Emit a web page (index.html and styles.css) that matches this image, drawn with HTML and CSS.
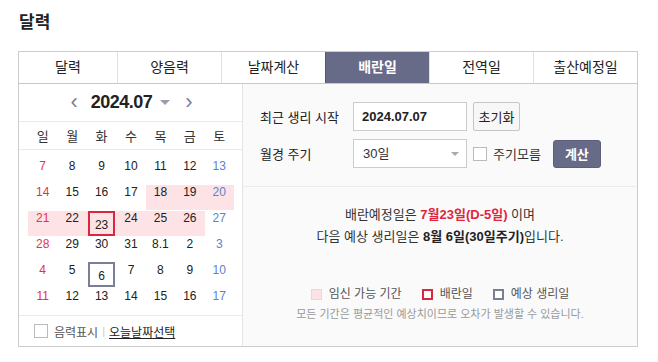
FILE: index.html
```html
<!DOCTYPE html>
<html lang="ko">
<head>
    <meta charset="UTF-8">
    <title>달력 - 배란일</title>
    <link rel="stylesheet" href="styles.css">
</head>
<body>
    <h2 class="page-title">달력</h2>

    <div class="cal-wrap">
        <ul class="tabs">
            <li>달력</li>
            <li>양음력</li>
            <li>날짜계산</li>
            <li class="on">배란일</li>
            <li>전역일</li>
            <li>출산예정일</li>
        </ul>

        <div class="cal-body">
            <div class="cal-left">
                <div class="cal-head">
                    <span class="arrow prev">&lsaquo;</span>
                    <span class="month">2024.07</span>
                    <span class="caret"></span>
                    <span class="arrow next-m">&rsaquo;</span>
                </div>
                <div class="week">
                    <span>일</span><span>월</span><span>화</span><span>수</span><span>목</span><span>금</span><span>토</span>
                </div>
                <div class="days" id="days"></div>
                <div class="cal-foot">
                    <span class="chk"></span>
                    <span class="lunar">음력표시</span>
                    <span class="bar">|</span>
                    <a href="#" class="today">오늘날짜선택</a>
                </div>
            </div>

            <div class="cal-right">
                <div class="form">
                    <div class="row">
                        <label>최근 생리 시작</label>
                        <div class="field date">2024.07.07</div>
                        <button type="button" class="btn-reset">초기화</button>
                    </div>
                    <div class="row">
                        <label>월경 주기</label>
                        <div class="field select">30일<span class="sel-caret"></span></div>
                        <span class="chk"></span>
                        <span class="unknown">주기모름</span>
                        <button type="button" class="btn-calc">계산</button>
                    </div>
                </div>
                <div class="result">
                    <p>배란예정일은 <b class="red">7월23일(D-5일)</b> 이며</p>
                    <p>다음 예상 생리일은 <b>8월 6일(30일주기)</b>입니다.</p>
                    <div class="legend">
                        <span class="lg lg-fert"></span>임신 가능 기간
                        <span class="lg lg-ovul"></span>배란일
                        <span class="lg lg-next"></span>예상 생리일
                    </div>
                    <p class="note">모든 기간은 평균적인 예상치이므로 오차가 발생할 수 있습니다.</p>
                </div>
            </div>
        </div>
    </div>

    <script>
        // weeks shown for July 2024 (starting from the week of the 7th)
        var weeks = [
            ["7", "8", "9", "10", "11", "12", "13"],
            ["14", "15", "16", "17", "18", "19", "20"],
            ["21", "22", "23", "24", "25", "26", "27"],
            ["28", "29", "30", "31", "8.1", "2", "3"],
            ["4", "5", "6", "7", "8", "9", "10"],
            ["11", "12", "13", "14", "15", "16", "17"]
        ];
        var fertile = { "1-4": 1, "1-5": 1, "1-6": 1, "2-0": 1, "2-1": 1, "2-2": 1, "2-3": 1, "2-4": 1, "2-5": 1 };
        var days = document.getElementById("days");

        weeks.forEach(function (week, r) {
            week.forEach(function (d, c) {
                var cell = document.createElement("div");
                cell.className = "day";
                if (c === 0) cell.classList.add("sun");
                if (c === 6) cell.classList.add("sat");
                if (fertile[r + "-" + c]) cell.classList.add("fert");
                var num = document.createElement("span");
                num.textContent = d;
                if (r === 2 && c === 2) num.className = "ovul";
                if (r === 4 && c === 2) num.className = "next";
                cell.appendChild(num);
                days.appendChild(cell);
            });
        });
    </script>
</body>
</html>
```

FILE: styles.css
```css
body {
    margin: 0;
    padding: 11px 18px 0;
    font-family: "Liberation Sans", "Noto Sans CJK KR", sans-serif;
    color: #222;
    background-color: #fff;
}

.page-title {
    margin: 0 0 17px 1px;
    font-size: 17px;
    line-height: 23px;
    font-weight: bold;
    color: #222;
}

.cal-wrap {
    width: 620px;
}

/* tabs */
.tabs {
    display: flex;
    margin: 0;
    padding: 0;
    list-style: none;
    border: 1px solid #ccc;
    border-bottom-color: #c8c8c8;
}

.tabs li {
    flex: 1;
    height: 31px;
    line-height: 30px;
    text-align: center;
    font-size: 14px;
    color: #222;
    border-left: 1px solid #e2e2e2;
}

.tabs li:first-child {
    border-left: none;
    flex: 0 0 98px;
}

.tabs li.on {
    background-color: #676b87;
    color: #fff;
    font-weight: bold;
    border-left-color: #55596f;
}

.cal-body {
    display: flex;
    border: 1px solid #ccc;
    border-top: none;
    height: 262px;
}

/* calendar */
.cal-left {
    width: 223px;
    border-right: 1px solid #e4e4e4;
    display: flex;
    flex-direction: column;
}

.cal-head {
    height: 37px;
    display: flex;
    align-items: center;
    justify-content: center;
    border-bottom: 1px solid #ebebeb;
    padding-left: 2px;
}

.cal-head .arrow {
    font-size: 22px;
    line-height: 20px;
    color: #7b7f98;
    margin-top: -2px;
}

.cal-head .prev {
    margin-right: 13px;
}

.cal-head .next-m {
    margin-left: 15px;
}

.cal-head .month {
    font-size: 18px;
    font-weight: bold;
    color: #222;
    letter-spacing: -0.5px;
}

.cal-head .caret {
    width: 0;
    height: 0;
    margin-left: 8px;
    border-left: 5px solid transparent;
    border-right: 5px solid transparent;
    border-top: 5px solid #9a9db0;
}

.week {
    display: grid;
    grid-template-columns: repeat(7, 1fr);
    padding: 0 8px 0 9px;
    height: 27px;
    align-items: center;
    border-bottom: 1px solid #ebebeb;
    font-size: 13px;
    text-align: center;
    color: #333;
}

.days {
    display: grid;
    grid-template-columns: repeat(7, 1fr);
    grid-auto-rows: 26px;
    padding: 9px 8px 0 9px;
    flex: 1;
    font-size: 12px;
    text-align: center;
}

.day {
    display: flex;
    justify-content: center;
    align-items: flex-start;
    line-height: 14px;
    color: #222;
}

.day.fert {
    background-color: #fde3e6;
    margin: 0 0 1px;
}

.day.sun {
    color: #e5314f;
}

.day.sat {
    color: #5a7fd4;
}

.day span {
    display: block;
}

.day .ovul,
.day .next {
    width: 23px;
    height: 16px;
    padding-top: 5px;
    border: 2px solid #d9283d;
    line-height: 14px;
}

.day .next {
    border-color: #7b7f95;
    margin-top: -1px;
}

.cal-foot {
    height: 30px;
    border-top: 1px solid #ebebeb;
    display: flex;
    align-items: center;
    padding-left: 15px;
    font-size: 12px;
}

.chk {
    display: inline-block;
    width: 12px;
    height: 12px;
    border: 1px solid #bbb;
    background-color: #fff;
}

.lunar {
    margin-left: 6px;
    color: #555;
}

.bar {
    margin: 0 4px;
    color: #ccc;
    font-size: 11px;
}

.today {
    color: #222;
    text-decoration: underline;
}

/* form */
.cal-right {
    flex: 1;
    background-color: #fafafa;
}

.form {
    padding: 18px 0 0 17px;
    height: 84px;
    border-bottom: 1px solid #ececec;
}

.row {
    display: flex;
    align-items: center;
    height: 29px;
    margin-bottom: 8px;
}

.row label {
    width: 93px;
    font-size: 13px;
    color: #222;
}

.field {
    box-sizing: border-box;
    width: 114px;
    height: 29px;
    border: 1px solid #ccc;
    background-color: #fff;
    padding: 0 8px;
    line-height: 27px;
    font-size: 13px;
}

.field.date {
    font-weight: bold;
}

.field.select {
    position: relative;
    padding-left: 9px;
    color: #333;
}

.sel-caret {
    position: absolute;
    right: 7px;
    top: 12px;
    border-left: 4px solid transparent;
    border-right: 4px solid transparent;
    border-top: 4px solid #aaa;
}

.btn-reset {
    margin-left: 6px;
    height: 29px;
    width: 47px;
    padding: 0;
    border: 1px solid #c6c6c6;
    border-radius: 2px;
    background-color: #f7f7f7;
    font-family: inherit;
    font-size: 13px;
    color: #222;
}

.row .chk {
    margin-left: 6px;
}

.unknown {
    margin-left: 6px;
    font-size: 13px;
    color: #333;
}

.btn-calc {
    margin-left: 12px;
    height: 28px;
    width: 48px;
    padding: 0;
    border: 1px solid #5b5f78;
    border-radius: 3px;
    background-color: #676b87;
    color: #fff;
    font-family: inherit;
    font-size: 13px;
    font-weight: bold;
}

/* result */
.result {
    text-align: center;
    padding-top: 17px;
    font-size: 13px;
    color: #333;
}

.result p {
    margin: 0;
    line-height: 22px;
}

.result b {
    color: #222;
}

.result b.red {
    color: #e0263d;
}

.legend {
    margin-top: 38px;
    display: flex;
    align-items: center;
    justify-content: center;
    font-size: 12px;
    color: #555;
    line-height: 16px;
}

.lg {
    display: inline-block;
    width: 11px;
    height: 11px;
    box-sizing: border-box;
    margin: 0 7px 0 20px;
}

.lg:first-child {
    margin-left: 0;
}

.lg-fert {
    background-color: #fde3e6;
    border: 1px solid #f6d0d4;
}

.lg-ovul {
    border: 2px solid #d9283d;
    background-color: #fff;
}

.lg-next {
    border: 2px solid #7b7f95;
    background-color: #fff;
}

.result p.note {
    margin-top: 4px;
    font-size: 11px;
    color: #999;
    line-height: 16px;
}
```
